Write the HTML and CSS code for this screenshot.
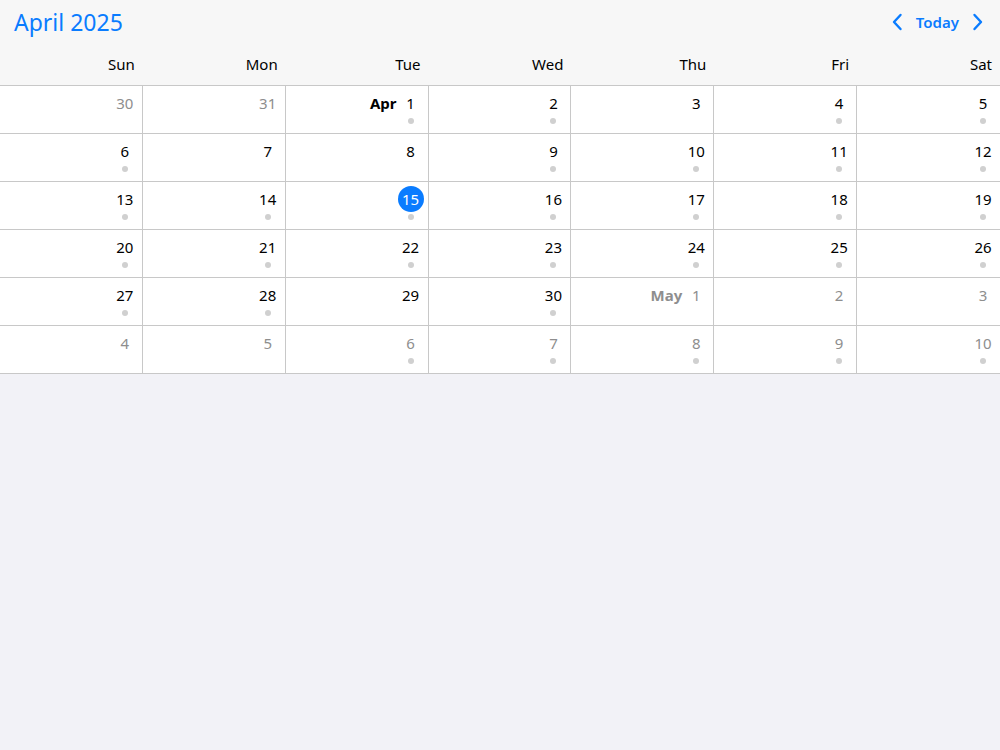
FILE: index.html
```html
<!DOCTYPE html>
<html>
<head>
<meta charset="utf-8">
<link rel="stylesheet" href="styles.css">
</head>
<body>
<div class="header">
  <div class="topbar">
    <div class="title">April 2025</div>
    <div class="nav">
      <svg class="chev" width="12" height="18" viewBox="0 0 12 18"><path d="M9.5 2 L3 9 L9.5 16" fill="none" stroke="#0a7cff" stroke-width="2.4" stroke-linecap="round" stroke-linejoin="round"/></svg>
      <span class="today">Today</span>
      <svg class="chev" width="12" height="18" viewBox="0 0 12 18"><path d="M2.5 2 L9 9 L2.5 16" fill="none" stroke="#0a7cff" stroke-width="2.4" stroke-linecap="round" stroke-linejoin="round"/></svg>
    </div>
  </div>
  <div class="weekdays">
    <div>Sun</div><div>Mon</div><div>Tue</div><div>Wed</div><div>Thu</div><div>Fri</div><div>Sat</div>
  </div>
</div>
<div class="grid" id="grid"></div>
<script src="app.js"></script>
</body>
</html>
```
FILE: styles.css
```css
html, body { margin: 0; padding: 0; }
body {
  background: #f2f2f7;
  font-family: "Noto Sans", "Open Sans", sans-serif;
  width: 1000px;
  height: 750px;
  overflow: hidden;
}
.header {
  background: #f7f7f7;
  height: 85px;
  display: flex;
  flex-direction: column;
}
.topbar {
  display: flex;
  justify-content: space-between;
  align-items: center;
  height: 46px;
  padding: 0 16px 0 14px;
}
.title {
  color: #0a7cff;
  font-size: 23px;
  line-height: 1;
  margin-top: -1px;
}
.nav {
  display: flex;
  align-items: center;
  gap: 13px;
  margin-top: -2px;
}
.today {
  color: #0a7cff;
  font-size: 15px;
  font-weight: 600;
}
.weekdays {
  display: grid;
  grid-template-columns: repeat(7, 1fr);
  font-size: 15px;
  color: #000;
  margin-top: 8px;
}
.weekdays div {
  text-align: right;
  padding-right: 8px;
}
.grid {
  display: grid;
  grid-template-columns: repeat(7, 1fr);
  background: #fff;
  border-top: 1px solid #c8c8c8;
}
.cell {
  height: 43px;
  border-bottom: 1px solid #c8c8c8;
  border-right: 1px solid #c8c8c8;
  display: flex;
  justify-content: flex-end;
  align-items: flex-start;
  padding: 4px 4px 0 0;
  box-sizing: content-box;
}
.cell:nth-child(7n) { border-right: none; }
.label {
  font-weight: 700;
  font-size: 15px;
  height: 26px;
  line-height: 26px;
  margin-right: 1px;
}
.col {
  width: 26px;
  display: flex;
  flex-direction: column;
  align-items: center;
}
.num {
  width: 26px;
  height: 26px;
  line-height: 26px;
  text-align: center;
  font-size: 15px;
  color: #000;
}
.other .num, .other .label { color: #8e8e8e; }
.num.cur {
  background: #0a7cff;
  color: #fff;
  border-radius: 50%;
}
.dot {
  width: 6px;
  height: 6px;
  border-radius: 50%;
  background: #d0d0d0;
  margin-top: 2px;
}
.dot.none { visibility: hidden; }
```
FILE: app.js
```js
var days = [
  [30,0,1,'',0],[31,0,1,'',0],[1,1,0,'Apr',0],[2,1,0,'',0],[3,0,0,'',0],[4,1,0,'',0],[5,1,0,'',0],
  [6,1],[7,0],[8,0],[9,1],[10,1],[11,1],[12,1],
  [13,1],[14,1],[15,1,0,'',1],[16,1],[17,1],[18,1],[19,1],
  [20,1],[21,1],[22,1],[23,1],[24,1],[25,1],[26,1],
  [27,1],[28,1],[29,0],[30,1],[1,0,1,'May',0],[2,0,1],[3,0,1],
  [4,0,1],[5,0,1],[6,1,1],[7,1,1],[8,1,1],[9,1,1],[10,1,1]
];
var g = document.getElementById('grid');
days.forEach(function(d){
  var c = document.createElement('div');
  c.className = 'cell' + (d[2] ? ' other' : '');
  if (d[3]) {
    var l = document.createElement('span');
    l.className = 'label';
    l.textContent = d[3];
    c.appendChild(l);
  }
  var col = document.createElement('div');
  col.className = 'col';
  var n = document.createElement('div');
  n.className = 'num' + (d[4] ? ' cur' : '');
  n.textContent = d[0];
  var dot = document.createElement('div');
  dot.className = 'dot' + (d[1] ? '' : ' none');
  col.appendChild(n);
  col.appendChild(dot);
  c.appendChild(col);
  g.appendChild(c);
});
```
